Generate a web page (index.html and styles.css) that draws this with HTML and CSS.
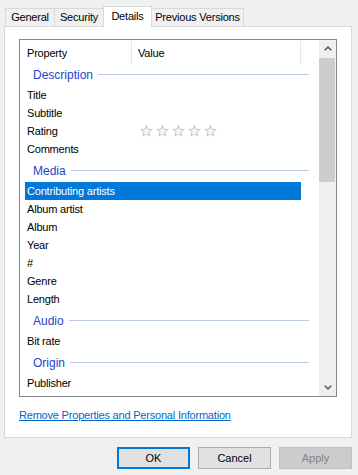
FILE: index.html
```html
<!DOCTYPE html>
<html lang="en">
<head>
    <meta charset="UTF-8">
    <title>Properties - Details</title>
    <link rel="stylesheet" href="styles.css">
</head>
<body>
    <svg class="defs" width="0" height="0">
        <symbol id="star" viewBox="0 0 13 12">
            <polygon points="6.5,0.6 7.97,4.28 12.21,4.45 8.88,7.07 10.03,11.15 6.5,8.8 2.97,11.15 4.12,7.07 0.79,4.45 5.03,4.28"/>
        </symbol>
        <symbol id="chev" viewBox="0 0 8 5">
            <polyline points="0.7,4.3 4,1.1 7.3,4.3"/>
        </symbol>
    </svg>

    <div class="dialog">
        <div class="tabs">
            <div class="tab tab-general">General</div>
            <div class="tab tab-security">Security</div>
            <div class="tab tab-details active">Details</div>
            <div class="tab tab-versions">Previous Versions</div>
        </div>

        <div class="panel">
            <div class="listbox">
                <div class="list">
                    <div class="header">
                        <div class="col col-prop">Property</div>
                        <div class="col col-val">Value</div>
                        <div class="col col-rest"></div>
                    </div>

                    <div class="group"><span>Description</span><i></i></div>
                    <div class="item">Title</div>
                    <div class="item">Subtitle</div>
                    <div class="item">
                        <span class="name">Rating</span>
                        <span class="stars">
                            <svg class="star"><use href="#star"/></svg>
                            <svg class="star"><use href="#star"/></svg>
                            <svg class="star"><use href="#star"/></svg>
                            <svg class="star"><use href="#star"/></svg>
                            <svg class="star"><use href="#star"/></svg>
                        </span>
                    </div>
                    <div class="item">Comments</div>

                    <div class="group"><span>Media</span><i></i></div>
                    <div class="item selected">Contributing artists</div>
                    <div class="item">Album artist</div>
                    <div class="item">Album</div>
                    <div class="item">Year</div>
                    <div class="item">#</div>
                    <div class="item">Genre</div>
                    <div class="item">Length</div>

                    <div class="group"><span>Audio</span><i></i></div>
                    <div class="item">Bit rate</div>

                    <div class="group"><span>Origin</span><i></i></div>
                    <div class="item">Publisher</div>
                </div>

                <div class="scrollbar">
                    <div class="arrow"><svg class="chev"><use href="#chev"/></svg></div>
                    <div class="thumb"></div>
                    <div class="track"></div>
                    <div class="arrow down"><svg class="chev"><use href="#chev"/></svg></div>
                </div>
            </div>

            <a class="link" href="#">Remove Properties and Personal Information</a>
        </div>

        <div class="buttons">
            <button class="btn default">OK</button>
            <button class="btn">Cancel</button>
            <button class="btn" disabled>Apply</button>
        </div>
    </div>
</body>
</html>
```

FILE: styles.css
```css
body {
    margin: 0;
    background: #f0f0f0;
    font-family: 'Liberation Sans', Arial, sans-serif;
    font-size: 11px;
    letter-spacing: -0.2px;
    color: #000;
}
.defs {
    position: absolute;
}
.dialog {
    width: 358px;
    height: 475px;
    padding-top: 6px;
    box-sizing: border-box;
}
.tabs {
    display: flex;
    align-items: flex-end;
    height: 20px;
    padding-left: 5px;
}
.tab {
    height: 18px;
    line-height: 17px;
    text-align: center;
    border: 1px solid #d9d9d9;
    border-bottom: none;
    box-sizing: border-box;
    background: #f0f0f0;
    margin-left: -1px;
}
.tab-general {
    width: 50px;
    margin-left: 0;
}
.tab-security {
    width: 50px;
}
.tab-details {
    width: 49px;
}
.tab-versions {
    width: 93px;
}
.tab.active {
    height: 21px;
    line-height: 18px;
    background: #fff;
    margin-bottom: -1px;
    position: relative;
    z-index: 1;
}
.panel {
    margin-left: 4px;
    width: 348px;
    height: 412px;
    box-sizing: border-box;
    border: 1px solid #d9d9d9;
    background: #fff;
    padding: 12px 0 0 14px;
}
.listbox {
    display: flex;
    width: 318px;
    height: 358px;
    box-sizing: border-box;
    border: 1px solid #828790;
}
.list {
    flex: 1;
    overflow: hidden;
}
.header {
    display: flex;
    height: 22px;
}
.col {
    box-sizing: border-box;
    line-height: 24px;
    height: 23px;
    margin-top: 1px;
    border-right: 1px solid #e5e5e5;
}
.col-prop {
    width: 112px;
    padding-left: 7px;
}
.col-val {
    width: 169px;
    padding-left: 6px;
}
.col-rest {
    flex: 1;
    border-right: none;
}
.group {
    display: flex;
    align-items: center;
    height: 24px;
    padding-left: 13px;
    margin-right: 10px;
    font-size: 12px;
    letter-spacing: 0;
    color: #2545c8;
}
.group span {
    padding-top: 2px;
}
.group i {
    flex: 1;
    height: 1px;
    margin-left: 5px;
    background: #b9c9ea;
}
.item {
    display: flex;
    align-items: center;
    height: 18px;
    margin: 0 18px 0 5px;
    padding-left: 2px;
}
.item.selected {
    background: #0078d7;
    color: #fff;
}
.name {
    width: 113px;
}
.stars {
    display: flex;
    gap: 3px;
}
.star {
    width: 13px;
    height: 12px;
    fill: #f7f7f7;
    stroke: #c4c4c4;
    stroke-width: 1;
}
.scrollbar {
    display: flex;
    flex-direction: column;
    width: 17px;
    background: #f0f0f0;
}
.arrow {
    height: 17px;
    display: flex;
    align-items: center;
    justify-content: center;
}
.arrow.down .chev {
    transform: rotate(180deg);
}
.chev {
    width: 8px;
    height: 5px;
    fill: none;
    stroke: #606060;
    stroke-width: 1.6;
}
.thumb {
    height: 124px;
    margin: 1px 1px 0 0;
    background: #cdcdcd;
}
.track {
    flex: 1;
}
.link {
    display: inline-block;
    margin-top: 12px;
    color: #0066cc;
    text-decoration: underline;
}
.buttons {
    display: flex;
    justify-content: flex-end;
    gap: 8px;
    padding: 9px 6px 0 0;
}
.btn {
    width: 73px;
    height: 22px;
    box-sizing: border-box;
    border: 1px solid #adadad;
    background: #e1e1e1;
    font-family: 'Liberation Sans', Arial, sans-serif;
    font-size: 11px;
    color: #000;
    padding: 0;
}
.btn.default {
    border: 2px solid #0078d7;
}
.btn:disabled {
    background: #cccccc;
    border-color: #bfbfbf;
    color: #838383;
}
```
